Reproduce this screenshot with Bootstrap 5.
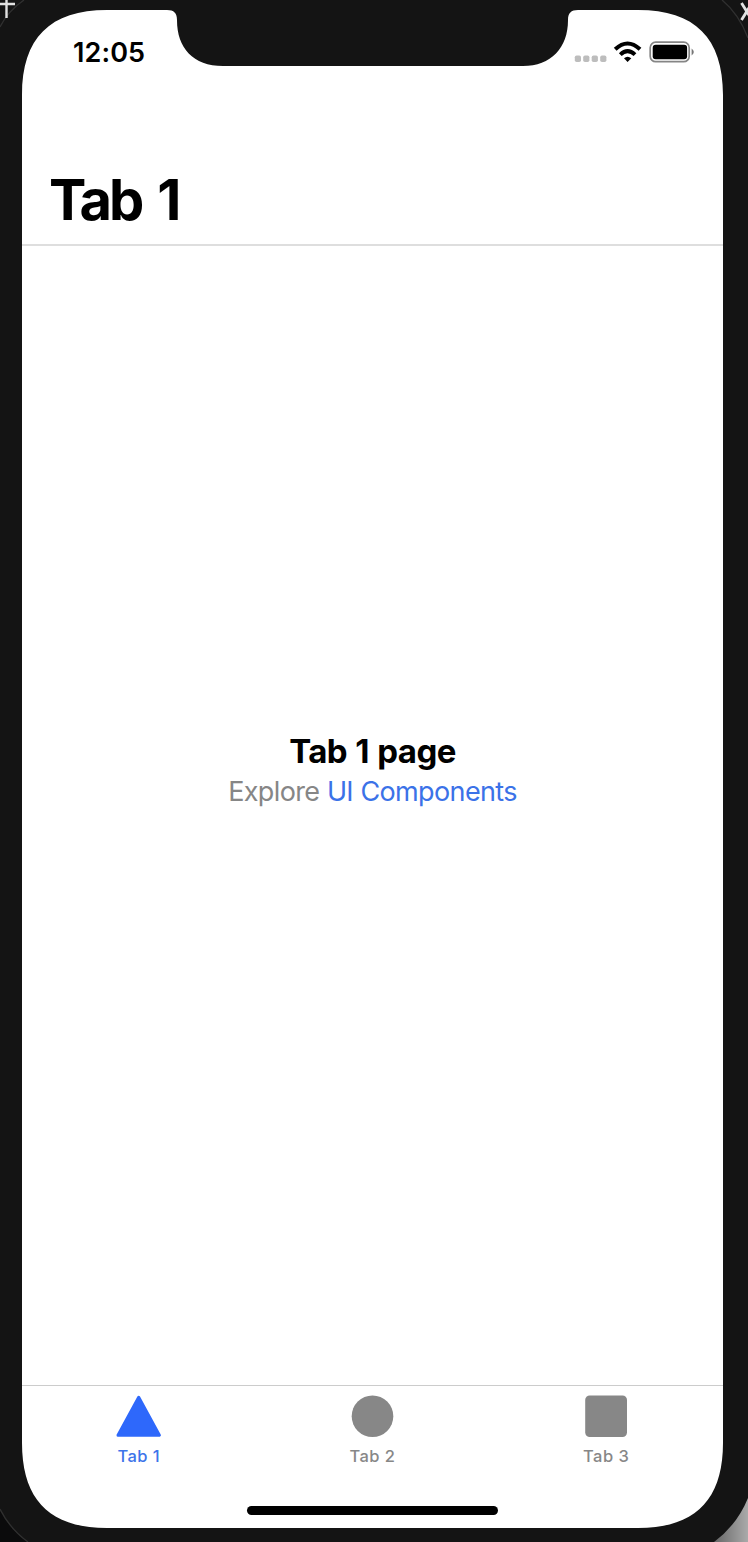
<!DOCTYPE html>
<html lang="en">
<head>
<meta charset="utf-8">
<meta name="viewport" content="width=device-width, initial-scale=1">
<title>Tab 1</title>
<link href="https://cdn.jsdelivr.net/npm/bootstrap@5.3.0/dist/css/bootstrap.min.css" rel="stylesheet">
<style>
body{width:748px;height:1542px;background:#141414;font-family:Inter,"Liberation Sans",sans-serif;color:#000;}
.frame{z-index:0}
.screen{z-index:1;width:701px;height:1518px;margin:10px 0 0 22px}
.status{height:84px;padding:0 28px 0 51px}
.clock{font-size:27px;font-weight:600;line-height:86px;height:84px;letter-spacing:.1px}
.page-head{height:152px;border-bottom:2px solid #dedede;padding:65px 28px 0 27px}
.page-title{font-size:56px;font-weight:700;line-height:82px;letter-spacing:-2.9px;word-spacing:5.5px}
.empty-state{padding-bottom:89px}
.empty-title{font-size:33px;font-weight:700;line-height:40px;letter-spacing:-.55px;word-spacing:1px}
.empty-text{font-size:27px;line-height:40px;padding-top:1px;color:#868686;letter-spacing:-.63px;word-spacing:.5px}
.empty-text a{color:#3b72e8}
.tabs{height:143px;border-top:1px solid #ccc}
.tabs .nav-link{color:#878787;padding:8px 0 0;font-size:16.5px;font-weight:500;line-height:22px;letter-spacing:.45px}
.tabs .nav-link.active{color:#3d74ea}
.tabs svg{margin-bottom:7px}
.home-bar{width:251px;height:9px;margin-bottom:13px;background:#000}
</style>
</head>
<body class="position-relative overflow-hidden">
<svg class="frame position-absolute top-0 start-0" width="748" height="1542" viewBox="0 0 748 1542" aria-hidden="true">
  <defs><linearGradient id="desk"><stop stop-color="#666"/><stop offset="1" stop-color="#aaa"/></linearGradient></defs>
  <path d="M748 1498Q737 1525 714 1542H748Z" fill="url(#desk)"/>
  <path d="M0 1511Q10 1530 28 1542H0Z" fill="#0b0b0c"/>
  <path d="M0 27Q8 11 24 0M722 0Q739 14 748 38M0 1509Q10 1529 28 1542" fill="none" stroke="#303030" stroke-width="1.3"/>
  <path d="M0 4H15M6.5 0V18" stroke="#e2e2e2" stroke-width="2.4"/>
  <path d="M741.5 3L752 20M752 3L741.5 20" stroke="#e2e2e2" stroke-width="2.8"/>
  <path fill="#fff" d="M22 95C22 38 50 10 107 10H167C174 10 177 13 177 20C177 48 193 66 223 66H523C551 66 568 48 568 20C568 13 571 10 578 10H638C695 10 723 38 723 95V1443C723 1500 695 1528 638 1528H107C50 1528 22 1500 22 1443Z"/>
</svg>
<div class="screen position-relative d-flex flex-column">
  <div class="status d-flex justify-content-between">
    <span class="clock">12:05</span>
    <svg width="122" height="84" viewBox="573 10 122 84" aria-label="Signal, Wi-Fi, battery">
      <g fill="#bdbdbd"><rect x="574.8" y="55.5" width="6.2" height="6.5" rx="1.8"/><rect x="583.2" y="55.5" width="6.2" height="6.5" rx="1.8"/><rect x="591.7" y="55.5" width="6.2" height="6.5" rx="1.8"/><rect x="600.2" y="55.5" width="6.2" height="6.5" rx="1.8"/></g>
      <path d="M615.2 49.3Q627.5 37.7 640 49.3M620.3 54.6Q627.5 47.7 635 54.6" fill="none" stroke="#000" stroke-width="4"/>
      <path d="M624 58.3Q627.6 55.2 631.3 58.3L627.6 62Z"/>
      <rect x="650.2" y="42.2" width="39" height="19.5" rx="5.5" fill="none" stroke="#858585" stroke-width="1.7"/>
      <rect x="652.7" y="44.7" width="34.4" height="14.6" rx="3"/>
      <path d="M691.6 48.6Q696 52 691.6 55.4Z" fill="#777"/>
    </svg>
  </div>
  <header class="page-head"><h1 class="page-title m-0">Tab 1</h1></header>
  <main class="empty-state flex-grow-1 d-flex flex-column align-items-center justify-content-center text-center">
    <strong class="empty-title">Tab 1 page</strong>
    <p class="empty-text m-0">Explore <a class="text-decoration-none" href="#">UI Components</a></p>
  </main>
  <footer class="tabs d-flex flex-column">
    <nav class="nav nav-fill row row-cols-3 g-0 flex-grow-1 align-items-start">
      <a class="nav-link active d-flex flex-column align-items-center" href="#"><svg width="46" height="44" viewBox="0 0 46 44"><path d="M22.7 3.2L43.4 41.2H2Z" fill="#2e68fb" stroke="#2e68fb" stroke-width="3" stroke-linejoin="round"/></svg>Tab 1</a>
      <a class="nav-link d-flex flex-column align-items-center" href="#"><svg width="44" height="44" viewBox="0 0 44 44"><circle cx="21.5" cy="22.2" r="20.8" fill="#878787"/></svg>Tab 2</a>
      <a class="nav-link d-flex flex-column align-items-center" href="#"><svg width="44" height="44" viewBox="0 0 44 44"><rect x="1.2" y="1.4" width="41.8" height="41.6" rx="4.5" fill="#878787"/></svg>Tab 3</a>
    </nav>
    <div class="home-bar rounded-pill align-self-center"></div>
  </footer>
</div>
<script src="https://cdn.jsdelivr.net/npm/bootstrap@5.3.0/dist/js/bootstrap.bundle.min.js"></script>
</body>
</html>
